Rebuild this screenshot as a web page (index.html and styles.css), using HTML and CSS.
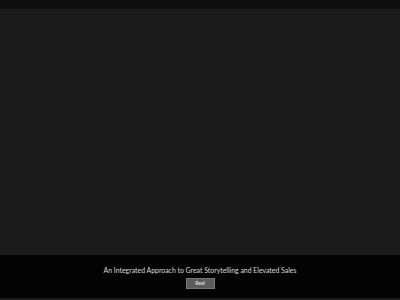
FILE: index.html
```html
<!DOCTYPE html>
<html lang="en">
<head>
    <meta charset="UTF-8">
    <title>Reel</title>
    <link rel="stylesheet" href="styles.css">
</head>
<body>
    <div class="top-bar"></div>
    <div class="stage"></div>
    <div class="caption">
        <p class="caption-text">An Integrated Approach to Great Storytelling and Elevated Sales</p>
        <a href="javascript:;" class="reel-btn">Reel</a>
    </div>
    <div class="bottom-line"></div>
</body>
</html>
```
FILE: styles.css
```css
html,
body{
    margin: 0px;
    padding: 0px;
    height: 100%;
}
body{
    display: flex;
    flex-direction: column;
    background: #1a1a1a;
    font-family: Lato, "Liberation Sans", sans-serif;
}
.top-bar{
    height: 8px;
    background: #0f0f0f;
    border-bottom: 1px solid #141414;
}
.stage{
    flex: 1;
    background: #1b1b1b;
}
.caption{
    height: 43px;
    background: #030303;
    display: flex;
    flex-direction: column;
    align-items: center;
}
.caption-text{
    margin: 10px 0px 0px 0px;
    font-size: 6.9px;
    line-height: 10px;
    color: #d8d8d8;
}
.reel-btn{
    display: block;
    margin-top: 3px;
    width: 27px;
    height: 9px;
    line-height: 9px;
    font-size: 5px;
    font-weight: bold;
    text-align: center;
    color: #dcdcdc;
    background: #5c5c5c;
    border: 1px solid #777;
    text-decoration: none;
}
.bottom-line{
    height: 2px;
    background: #1a1a1a;
}
```
